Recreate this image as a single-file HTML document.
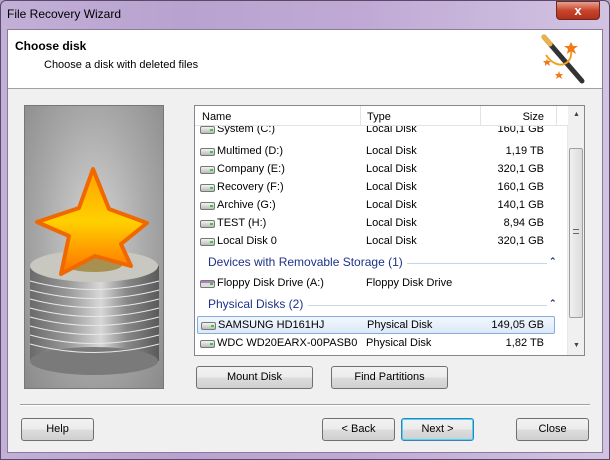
<!DOCTYPE html>
<html><head><style>
*{margin:0;padding:0;box-sizing:border-box}
body{width:610px;height:460px;overflow:hidden;font-family:"Liberation Sans",Tahoma,sans-serif;font-size:11px;color:#000;background:#b9a3cc;position:relative}
.frame{position:absolute;left:0;top:0;width:610px;height:460px;background:linear-gradient(90deg,#c2b0d8,#b8a2cf 30%,#c0aad5 60%,#d2c3e2);border:1px solid #5a4a6a;border-radius:6px 6px 0 0}
.title{position:absolute;left:7px;top:7px;font-size:12px;color:#000}
.close{position:absolute;left:556px;top:1px;width:44px;height:19px;border-radius:0 0 4px 4px;background:linear-gradient(#e8a090,#c8442c 50%,#b0301c);border:1px solid #6a2a20;color:#fff;font-weight:bold;text-align:center;font-size:13px;line-height:17px}
.client{position:absolute;left:7px;top:29px;width:596px;height:424px;background:#f0f0f0;border:1px solid #8a7c98}
.header{position:absolute;left:0;top:0;width:594px;height:59px;background:#fff;border-bottom:1px solid #a0a0a0}
.h1{position:absolute;left:7px;top:9px;font-weight:bold;font-size:12px}
.h2{position:absolute;left:36px;top:29px;font-size:11px}
.img{position:absolute;left:24px;top:105px;width:140px;height:284px;background:radial-gradient(ellipse at 50% 45%,#d4d4d4,#a8a8a8 55%,#8a8a8a);border:1px solid #777}
.list{position:absolute;left:194px;top:105px;width:391px;height:251px;background:#fff;border:1px solid #828790;overflow:hidden}
.hdr{position:absolute;left:0;top:0;width:373px;height:20px;border-bottom:1px solid #e3e3e3;background:#fff;z-index:2}
.hdr span{position:absolute;top:5px}
.sep{position:absolute;top:0;width:1px;height:20px;background:#e3e3e3}
.row{position:absolute;left:0;width:373px;height:18px}
.row span{position:absolute;top:3px}
.n{left:22px}.t{left:171px}.s{right:24px}
.ic{position:absolute;left:5px;top:6px;width:15px;height:8px;border:1px solid #777;border-radius:2px;background:linear-gradient(#f4f4f4,#bbb)}
.ic:after{content:"";position:absolute;right:1px;top:2px;width:3px;height:2px;background:#3c3}
.grp{position:absolute;left:13px;color:#1e3287;font-size:12px}
.gl{position:absolute;height:1px;background:#c8d4e8}
.car{position:absolute;left:354px;color:#1e3287;font-size:9px;font-weight:bold}
.sb{position:absolute;right:0;top:0;width:17px;height:249px;background:#f0f0f0;border-left:1px solid #e8e8e8}
.thumb{position:absolute;left:1px;top:42px;width:14px;height:170px;border:1px solid #a0a0a0;border-radius:2px;background:linear-gradient(90deg,#f0f0f0,#dcdcdc)}
.btn{position:absolute;height:23px;border:1px solid #707070;border-radius:3px;background:linear-gradient(#f2f2f2,#ebebeb 50%,#dddddd 51%,#cfcfcf);text-align:center;line-height:21px;font-size:11px}
.line{position:absolute;left:20px;top:404px;width:570px;height:2px;border-top:1px solid #a0a0a0;border-bottom:1px solid #fff}
</style></head><body>
<div class="frame"></div>
<div class="title">File Recovery Wizard</div>
<div class="close">x</div>
<div class="client">
 <div class="header">
  <div class="h1">Choose disk</div>
  <div class="h2">Choose a disk with deleted files</div>
  <svg style="position:absolute;left:530px;top:3px" width="50" height="52" viewBox="0 0 50 52">
   <path d="M6 4 L44 48" stroke="#333" stroke-width="5" stroke-linecap="round"/>
   <path d="M6 4 L12 11" stroke="#e9b24a" stroke-width="5" stroke-linecap="round"/>
   <path d="M8 22 C20 40 38 30 32 14" stroke="#f2a020" stroke-width="2" fill="none"/>
   <polygon points="33,9 35,13 40,13 36,16 38,21 33,18 29,21 30,16 26,13 31,13" fill="#f07a18"/>
   <polygon points="9,26 10,28 13,28 11,30 12,33 9,31 7,33 7,30 5,28 8,28" fill="#f07a18"/>
   <polygon points="21,38 22,41 25,41 23,43 24,46 21,44 18,46 19,43 17,41 20,41" fill="#f07a18"/>
  </svg>
 </div>
</div>
<div class="img">
 <svg width="140" height="284" viewBox="0 0 140 284">
  <defs><linearGradient id="m" x1="0" x2="1"><stop offset="0" stop-color="#6a6a6a"/><stop offset=".3" stop-color="#9a9a9a"/><stop offset=".55" stop-color="#d8d8d8"/><stop offset=".75" stop-color="#888"/><stop offset="1" stop-color="#5a5a5a"/></linearGradient>
  <linearGradient id="st" x1="0" y1="0" x2="0" y2="1"><stop offset="0" stop-color="#ffa000"/><stop offset=".5" stop-color="#ffd000"/><stop offset="1" stop-color="#ff7000"/></linearGradient></defs>
  <rect x="5" y="160" width="129" height="95" fill="url(#m)"/>
  <ellipse cx="69" cy="255" rx="64" ry="14" fill="#7a7a7a"/>
  <g stroke="#e8e8e8" stroke-width="1" fill="none">
   <path d="M5 175 Q69 192 134 175"/><path d="M5 184 Q69 201 134 184"/><path d="M5 193 Q69 210 134 193"/><path d="M5 202 Q69 219 134 202"/><path d="M5 211 Q69 228 134 211"/><path d="M5 220 Q69 237 134 220"/><path d="M5 229 Q69 246 134 229"/><path d="M5 238 Q69 255 134 238"/>
  </g>
  <ellipse cx="69" cy="160" rx="64" ry="16" fill="#c8c8c0"/>
  <ellipse cx="69" cy="159" rx="28" ry="7" fill="#a89050"/>
  <polygon points="68,63 84,103 122,117 96,138 106,160 70,150 36,168 44,130 12,116 54,102" fill="url(#st)" stroke="#f06800" stroke-width="4" stroke-linejoin="round"/>
 </svg>
</div>
<div class="list">
 <div class="hdr"><span style="left:7px">Name</span><span style="left:172px">Type</span><span style="right:24px">Size</span><div class="sep" style="left:165px"></div><div class="sep" style="left:285px"></div><div class="sep" style="left:361px"></div></div>
 <div class="row" style="top:14px"><div class="ic"></div><span class="n">System (C:)</span><span class="t">Local Disk</span><span class="s">160,1 GB</span></div>
 <div class="row" style="top:36px"><div class="ic"></div><span class="n">Multimed (D:)</span><span class="t">Local Disk</span><span class="s">1,19 TB</span></div>
 <div class="row" style="top:54px"><div class="ic"></div><span class="n">Company (E:)</span><span class="t">Local Disk</span><span class="s">320,1 GB</span></div>
 <div class="row" style="top:72px"><div class="ic"></div><span class="n">Recovery (F:)</span><span class="t">Local Disk</span><span class="s">160,1 GB</span></div>
 <div class="row" style="top:90px"><div class="ic"></div><span class="n">Archive (G:)</span><span class="t">Local Disk</span><span class="s">140,1 GB</span></div>
 <div class="row" style="top:108px"><div class="ic"></div><span class="n">TEST (H:)</span><span class="t">Local Disk</span><span class="s">8,94 GB</span></div>
 <div class="row" style="top:126px"><div class="ic"></div><span class="n">Local Disk 0</span><span class="t">Local Disk</span><span class="s">320,1 GB</span></div>
 <div class="grp" style="top:149px">Devices with Removable Storage (1)</div><div class="gl" style="left:212px;width:140px;top:157px"></div><div class="car" style="top:150px">&#8963;</div>
 <div class="row" style="top:168px"><div class="ic" style="background:linear-gradient(#b080c0 30%,#ddd 30%)"></div><span class="n">Floppy Disk Drive (A:)</span><span class="t">Floppy Disk Drive</span></div>
 <div class="grp" style="top:191px">Physical Disks (2)</div><div class="gl" style="left:113px;width:239px;top:199px"></div><div class="car" style="top:192px">&#8963;</div>
 <div class="row" style="top:210px;left:2px;width:358px;border:1px solid #84acdd;border-radius:2px;background:linear-gradient(#f2f7fd,#dde9f8)"><div class="ic" style="left:3px;top:5px"></div><span class="n" style="left:20px;top:2px">SAMSUNG HD161HJ</span><span class="t" style="left:169px;top:2px">Physical Disk</span><span class="s" style="right:10px;top:2px">149,05 GB</span></div>
 <div class="row" style="top:228px"><div class="ic"></div><span class="n">WDC WD20EARX-00PASB0</span><span class="t">Physical Disk</span><span class="s">1,82 TB</span></div>
 <div class="sb"><div style="position:absolute;left:5px;top:5px;font-size:7px;color:#444">&#9650;</div><div class="thumb"><div style="position:absolute;left:3px;top:80px;width:6px;height:5px;border-top:1px solid #666;border-bottom:1px solid #666"></div></div><div style="position:absolute;left:5px;top:236px;font-size:7px;color:#444">&#9660;</div></div>
</div>
<div class="btn" style="left:196px;top:366px;width:117px">Mount Disk</div>
<div class="btn" style="left:331px;top:366px;width:117px">Find Partitions</div>
<div class="line"></div>
<div class="btn" style="left:21px;top:418px;width:73px">Help</div>
<div class="btn" style="left:322px;top:418px;width:73px">&lt; Back</div>
<div class="btn" style="left:401px;top:418px;width:73px;border-color:#3c7fb1;box-shadow:inset 0 0 0 1px #48d8fb">Next &gt;</div>
<div class="btn" style="left:516px;top:418px;width:73px">Close</div>
</body></html>
